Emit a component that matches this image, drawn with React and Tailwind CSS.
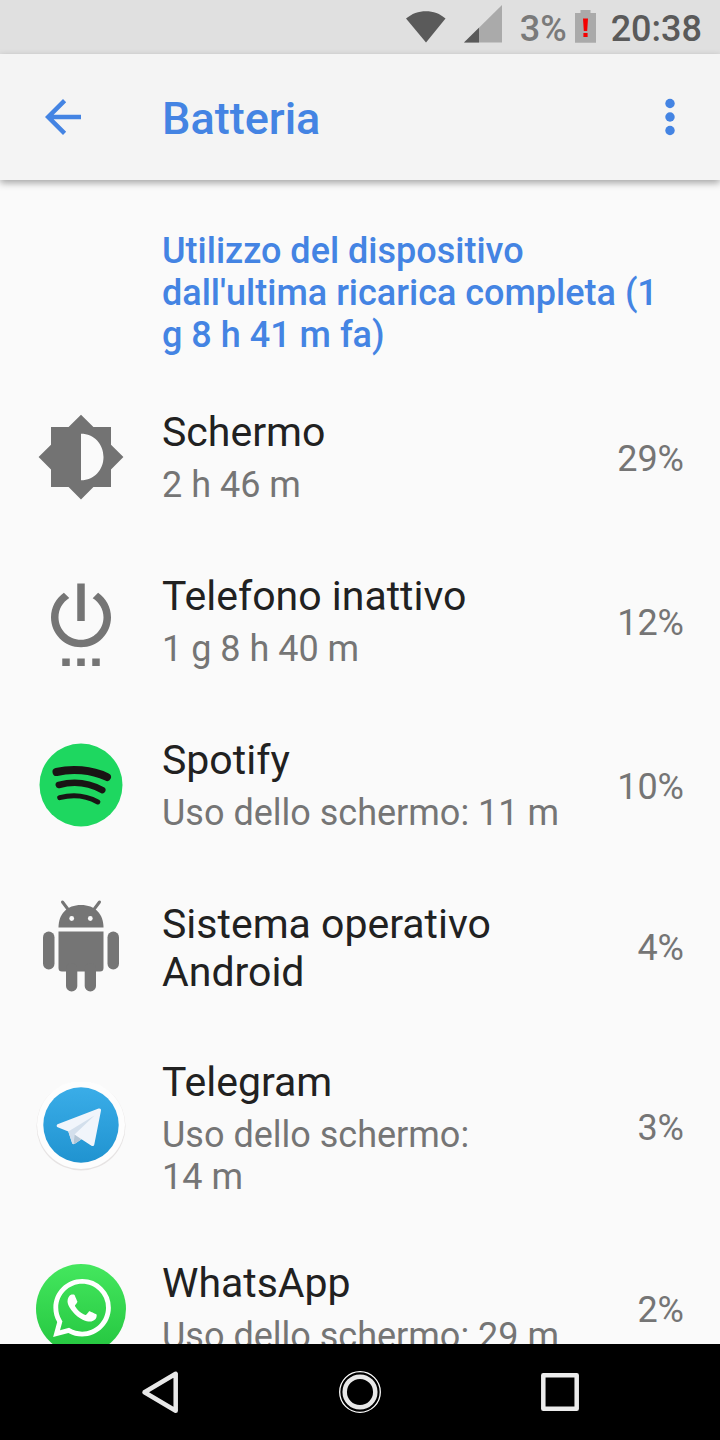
import React from 'react'
import clsx from 'clsx'
import { SiWhatsapp } from 'react-icons/si'

const ScreenIcon = () => (
  <svg viewBox="0 0.25 24 24" className="w-full h-full" fill="#737373" aria-hidden="true">
    <path d="M20 15.31L23.31 12 20 8.69V4h-4.69L12 .69 8.69 4H4v4.69L.69 12 4 15.31V20h4.69L12 23.31 15.31 20H20v-4.69zM12 18.2V5.8c3.5 0 6 2.8 6 6.2s-2.5 6.2-6 6.2z" />
  </svg>
)

const IdleIcon = () => (
  <svg viewBox="0 0.25 24 24" className="w-full h-full" fill="#757575" aria-hidden="true">
    <path d="M7 24h2v-2H7v2zm4 0h2v-2h-2v2zm2-22h-2v10h2V2zm3.56 2.44l-1.45 1.45C16.84 6.94 18 8.83 18 11c0 3.31-2.69 6-6 6s-6-2.69-6-6c0-2.17 1.16-4.06 2.88-5.12L7.44 4.44C5.36 5.88 4 8.28 4 11c0 4.42 3.58 8 8 8s8-3.58 8-8c0-2.72-1.36-5.12-3.44-6.56zM15 24h2v-2h-2v2z" />
  </svg>
)

const SpotifyIcon = () => (
  <svg viewBox="0 0 90 90" className="w-full h-full" fill="none" aria-hidden="true">
    <circle cx="45" cy="44" r="41.5" fill="#1ed760" />
    <g stroke="#191414" strokeLinecap="round">
      <path d="M20.5 31C36 27.3 55 28.5 71 36" strokeWidth="8" />
      <path d="M22.8 44C37 40.200 53 41.800 66.300 49.200" strokeWidth="6.5" />
      <path d="M23.700 56.700C36 53.500 50 54.500 61.800 61" strokeWidth="5" />
    </g>
  </svg>
)

const AndroidIcon = () => (
  <svg viewBox="0 1 90 90" className="w-full h-full overflow-visible" fill="#757575" aria-hidden="true">
    <path d="M26.5 1l6 8M63.5 1l-6 8" stroke="#757575" strokeWidth="3" strokeLinecap="round" />
    <path d="M22.5 26.5C22.5 13 31 4 45 4s22.5 9 22.5 22.5z" />
    <circle cx="35.7" cy="17.5" r="2.4" fill="#fafafa" />
    <circle cx="54.3" cy="17.5" r="2.4" fill="#fafafa" />
    <path d="M22.5 30.5h45V67a3.5 3.5 0 0 1-3.5 3.5H26a3.5 3.5 0 0 1-3.5-3.5z" />
    <rect x="7" y="30.5" width="11.5" height="38" rx="5.7" />
    <rect x="71.5" y="30.5" width="11.5" height="38" rx="5.7" />
    <rect x="30" y="62" width="11.3" height="28.5" rx="5.6" />
    <rect x="48.7" y="62" width="11.3" height="28.5" rx="5.6" />
  </svg>
)

const TelegramIcon = () => (
  <svg viewBox="0 0 90 90" className="w-full h-full" aria-hidden="true">
    <defs>
      <linearGradient id="tg-sky" x1="0" y1="0" x2="0" y2="1">
        <stop offset="0" stopColor="#3aade8" />
        <stop offset="1" stopColor="#2093d0" />
      </linearGradient>
    </defs>
    <circle cx="45" cy="44" r="44.5" fill="#e6e3e3" />
    <circle cx="45" cy="43" r="44" fill="#fdfdfd" />
    <circle cx="45" cy="43" r="37.7" fill="url(#tg-sky)" />
    <path d="M21.5 42.3L62.6 26.600c1.500-.500 2.700.300 2.400 2L58.300 62.400c-.400 1.700-1.600 2.200-3.200 1.200L45.500 57.200l-6.700 4.600c-1.400.900-2.400.400-2.800-1L32.300 49.500l-10.600-4.200c-1.300-.600-1.400-2.300-.2-3z" fill="#f1f5fb" />
    <path d="M32.300 49.500L58.500 33.500 38.500 52.500 37.600 62c-.8 0-1.400-.4-1.600-1.200z" fill="#d3dfec" />
    <path d="M38.500 52.500l7 4.700-6.700 4.600c-.4.3-.8.3-1.200.2z" fill="#b4c6d6" />
  </svg>
)

const WhatsAppIcon = () => (
  <svg viewBox="0 0 90 90" className="w-full h-full" aria-hidden="true">
    <defs>
      <linearGradient id="wa-green" x1="0" y1="0" x2="0" y2="1">
        <stop offset="0" stopColor="#44e75e" />
        <stop offset="1" stopColor="#24c53f" />
      </linearGradient>
    </defs>
    <circle cx="45" cy="45" r="45" fill="url(#wa-green)" />
    <SiWhatsapp x="17" y="15" size={58} color="#fff" />
  </svg>
)

const usage = [
  { name: 'Schermo', detail: '2 h 46 m', percent: '29%', Icon: ScreenIcon },
  { name: 'Telefono inattivo', detail: '1 g 8 h 40 m', percent: '12%', Icon: IdleIcon },
  { name: 'Spotify', detail: 'Uso dello schermo: 11 m', percent: '10%', Icon: SpotifyIcon },
  { name: 'Sistema operativo Android', percent: '4%', Icon: AndroidIcon },
  { name: 'Telegram', detail: 'Uso dello schermo:\n14 m', percent: '3%', Icon: TelegramIcon },
  { name: 'WhatsApp', detail: 'Uso dello schermo: 29 m', percent: '2%', Icon: WhatsAppIcon },
]

const StatusBar = () => (
  <div className="shrink-0 h-[54px] px-[18px] bg-[#e0e0e0] flex items-center justify-end text-[36px] leading-[42px] font-medium">
    <svg viewBox="0 0 40 54" className="w-10 h-[54px] mr-[18px]" fill="#5a5a5a" aria-label="Wi-Fi">
      <path d="M0 18.5C11 8.700 29 8.700 39.500 18.500L20 42.500z" />
    </svg>
    <svg viewBox="0 0 40 54" className="w-10 h-[54px] mr-4" aria-label="Segnale">
      <path d="M0 42.5L38 5v37.5z" fill="#aaaaaa" />
      <path d="M0 42.5L15 27.7v14.8z" fill="#5a5a5a" />
    </svg>
    <span className="pt-1 text-[#7a7a7a] mr-2">3%</span>
    <svg viewBox="0 0 22 54" className="w-[22px] h-[54px] mr-3.5" aria-label="Batteria scarica">
      <path d="M0 13h5.5v-3h10v3H21v29.7H0z" fill="#aaaaaa" />
      <path d="M8 18.5h5l-.8 12.5H8.8zM8.400 33h4.200v4H8.400z" fill="#f40000" />
    </svg>
    <span className="pt-1 text-[#5a5a5a]">20:38</span>
  </div>
)

const AppBar = () => (
  <header className="relative z-10 shrink-0 h-[126px] pl-9 pr-[23px] bg-[#f4f4f4] shadow-[0_3px_7px_rgba(0,0,0,0.34)] flex items-center text-[#4484e3]">
    <button type="button" aria-label="Indietro" className="w-[54px] h-[54px]">
      <svg viewBox="0 0 24 24" className="w-full h-full" fill="currentColor">
        <path d="M20 11H7.83l5.59-5.59L12 4l-8 8 8 8 1.41-1.41L7.83 13H20v-2z" />
      </svg>
    </button>
    <h1 className="flex-1 pl-[72px] pt-1 text-[45px] leading-[54px] font-medium">Batteria</h1>
    <button type="button" aria-label="Altre opzioni" className="w-[54px] h-[54px]">
      <svg viewBox="0 0 24 24" className="w-full h-full" fill="currentColor">
        <circle cx="12" cy="6" r="2.1" />
        <circle cx="12" cy="12" r="2.1" />
        <circle cx="12" cy="18" r="2.1" />
      </svg>
    </button>
  </header>
)

const UsageRow = ({ name, detail, percent, Icon }) => (
  <li className={clsx('px-9 flex', detail ? 'min-h-[164px]' : 'min-h-[158px]')}>
    <div className="w-[90px] h-[90px] mr-9 shrink-0 self-center">
      <Icon />
    </div>
    <div className="flex-1 min-w-0 pt-8 pb-[29px]">
      <h3 className="text-[41px] leading-[48px] text-[#212121]">{name}</h3>
      {detail && <p className="mt-2 text-[36px] leading-[42px] text-[#757575] whitespace-pre-line">{detail}</p>}
    </div>
    <span className="ml-9 pt-0.5 shrink-0 self-center text-[36px] leading-[42px] text-[#757575]">{percent}</span>
  </li>
)

const NavBar = () => (
  <nav className="relative z-10 shrink-0 h-24 px-[60px] bg-black flex items-center">
    <button type="button" aria-label="Indietro" className="flex-1 flex justify-center">
      <svg viewBox="0 0 48 48" className="w-12 h-12" fill="none" stroke="#e8e8e8" strokeWidth="4.5" strokeLinejoin="round">
        <path d="M8.5 24.3L39.7 5.8v37z" />
      </svg>
    </button>
    <button type="button" aria-label="Home" className="flex-1 flex justify-center">
      <svg viewBox="0 0 48 48" className="w-12 h-12" fill="none" stroke="#e8e8e8">
        <circle cx="24" cy="24" r="20.3" strokeWidth="1.3" stroke="#fff" />
        <circle cx="24" cy="24" r="15.3" strokeWidth="4.5" />
      </svg>
    </button>
    <button type="button" aria-label="App recenti" className="flex-1 flex justify-center">
      <svg viewBox="0 0 48 48" className="w-12 h-12" fill="none" stroke="#ececec" strokeWidth="4.5" strokeLinejoin="round">
        <rect x="7.3" y="7.3" width="33.4" height="33.4" />
      </svg>
    </button>
  </nav>
)

export default function App() {
  return (
    <div className="h-screen flex flex-col bg-[#fafafa] font-['Roboto',sans-serif]">
      <StatusBar />
      <AppBar />
      <main className="flex-1 min-h-0 overflow-y-auto [scrollbar-width:none]">
        <h2 className="pt-[50px] pb-5 pl-[162px] pr-9 text-[36px] leading-[42px] font-medium text-[#4484e3]">
          Utilizzo del dispositivo dall'ultima ricarica completa (1 g 8 h 41 m fa)
        </h2>
        <ul>
          {usage.map((item) => (
            <UsageRow key={item.name} {...item} />
          ))}
        </ul>
      </main>
      <NavBar />
    </div>
  )
}
